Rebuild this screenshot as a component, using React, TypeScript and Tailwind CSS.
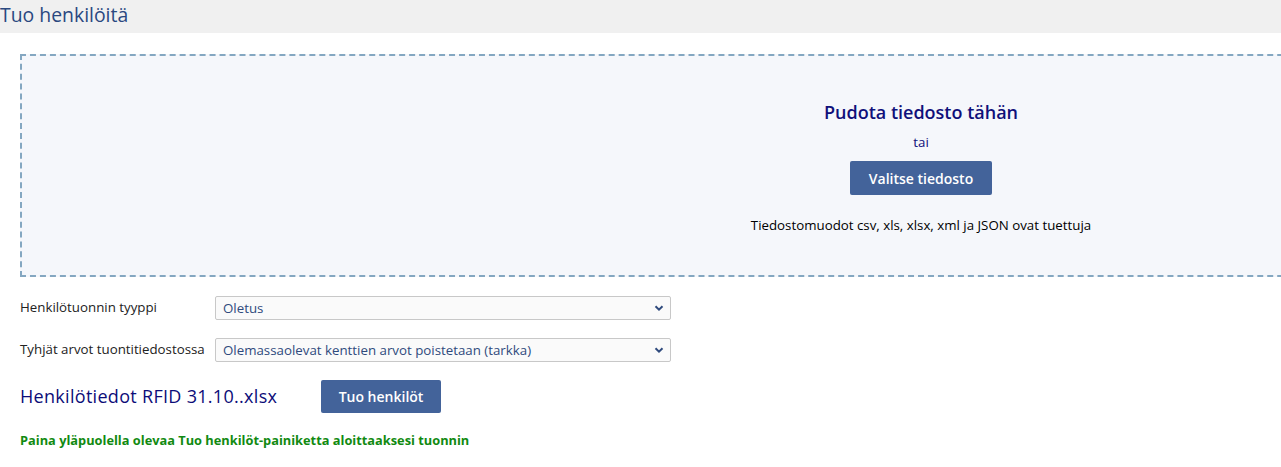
import React from 'react';

const font = { fontFamily: '"Open Sans", "Noto Sans", sans-serif' };

const Chevron = () => (
  <svg width="10" height="8" viewBox="0 0 10 8" className="absolute right-[6px] top-1/2 -translate-y-1/2 pointer-events-none">
    <path d="M1.5 2.2 L5 5.6 L8.5 2.2" fill="none" stroke="#2f4a7d" strokeWidth="2" />
  </svg>
);

const SelectRow = ({ label, value }: { label: string; value: string }) => (
  <div className="flex items-center h-[24px]">
    <div className="w-[195px] text-[13.3px] text-[#222]">{label}</div>
    <div className="relative w-[456px] h-[24px] border border-[#c8c8c8] rounded-[2px] bg-[#fafafa]">
      <div className="pl-[7px] leading-[22px] text-[13.3px] text-[#2f4a7d]">{value}</div>
      <Chevron />
    </div>
  </div>
);

export default function App() {
  return (
    <div className="w-[1281px] h-[467px] overflow-hidden bg-white" style={font}>
      {/* Page title */}
      <div className="h-[33px] bg-[#f0f0f0] flex items-center">
        <h1 className="text-[19.4px] text-[#2a4880] leading-none -mt-[4px]">Tuo henkilöitä</h1>
      </div>

      <div className="pl-[20px] pt-[21px]">
        {/* Drop zone */}
        <div className="w-[1802px] h-[223px] border-2 border-dashed border-[#84a7c1] bg-[#f5f7fb] flex flex-col items-center pt-[43px]">
          <div className="text-[18px] font-semibold text-[#10107a] leading-[26px]">Pudota tiedosto tähän</div>
          <div className="mt-[8px] text-[13.3px] text-[#10107a] leading-[18px]">tai</div>
          <button className="mt-[10px] w-[142px] h-[34px] bg-[#43639a] text-white text-[14px] font-semibold rounded-[2px]">
            Valitse tiedosto
          </button>
          <div className="mt-[21px] text-[13.3px] text-black leading-[18px]">
            Tiedostomuodot csv, xls, xlsx, xml ja JSON ovat tuettuja
          </div>
        </div>

        {/* Options */}
        <div className="mt-[19px] flex flex-col gap-[18px]">
          <SelectRow label="Henkilötuonnin tyyppi" value="Oletus" />
          <SelectRow label="Tyhjät arvot tuontitiedostossa" value="Olemassaolevat kenttien arvot poistetaan (tarkka)" />
        </div>

        {/* File + import */}
        <div className="mt-[18px] flex items-center h-[33px]">
          <div className="w-[301px] text-[18px] tracking-[0.3px] text-[#0c0c78]">Henkilötiedot RFID 31.10..xlsx</div>
          <button className="w-[120px] h-[33px] bg-[#43639a] text-white text-[14px] font-semibold rounded-[2px]">
            Tuo henkilöt
          </button>
        </div>

        <div className="mt-[18px] text-[12.8px] font-bold text-[#118a11]">
          Paina yläpuolella olevaa Tuo henkilöt-painiketta aloittaaksesi tuonnin
        </div>
      </div>
    </div>
  );
}
